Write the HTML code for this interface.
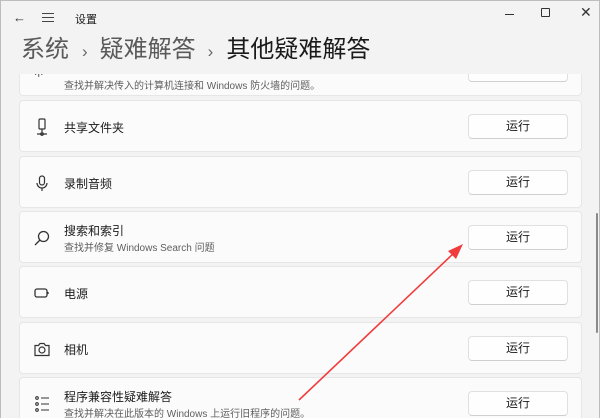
<!DOCTYPE html>
<html><head><meta charset="utf-8"><style>
*{margin:0;padding:0;box-sizing:border-box}
body{width:600px;height:418px;overflow:hidden;background:#f3f3f3;font-family:"Liberation Sans","Noto Sans CJK SC",sans-serif;position:relative;color:#1b1b1b}
.win{position:absolute;left:0;top:0;width:600px;height:418px;border:1px solid #bdbdbd;border-bottom:none}
.t{position:absolute;font-size:11px}
.clip{position:absolute;left:0;top:74px;width:600px;height:344px;overflow:hidden}
.card{position:absolute;left:19px;width:563px;height:52px;background:#fbfbfb;border:1px solid #e6e6e6;border-radius:4px}
.card .n{position:absolute;left:44px;font-size:12px;color:#1b1b1b}
.card .d{position:absolute;left:44px;font-size:10px;color:#5f5f5f}
.btn{position:absolute;left:448px;top:13px;width:100px;height:25px;background:#fefefe;border:1px solid #e0e0e0;border-bottom-color:#cfcfcf;border-radius:4px;font-size:12px;text-align:center;line-height:23px}
.ic{position:absolute;left:12px;top:16px;width:20px;height:20px}
</style></head><body>
<div class="win"></div>
<div class="t" style="left:13px;top:10px;font-size:13px;color:#333">←</div>
<div style="position:absolute;left:42px;top:13px;width:12px;height:9px;border-top:1px solid #444;border-bottom:1px solid #444"><div style="margin-top:3px;height:1px;background:#444"></div></div>
<div class="t" style="left:75px;top:11px;font-size:11px">设置</div>
<div style="position:absolute;left:505px;top:14px;width:9px;height:1px;background:#333"></div>
<div style="position:absolute;left:541px;top:8px;width:9px;height:9px;border:1px solid #333;border-radius:1px"></div>
<div class="t" style="left:580px;top:4px;font-size:14px;color:#333">✕</div>
<div style="position:absolute;left:21px;top:34px;font-size:24px;white-space:nowrap;line-height:32px"><span style="color:#5a5a5a">系统</span><span style="color:#666;font-size:17px;margin:0 12px 0 13px">›</span><span style="color:#5a5a5a">疑难解答</span><span style="color:#666;font-size:17px;margin:0 13px 0 12px">›</span><span style="color:#1a1a1a">其他疑难解答</span></div>
<div class="clip">
 <div class="card" style="top:-30px;height:52px"><div class="d" style="top:32px">查找并解决传入的计算机连接和 Windows 防火墙的问题。</div><div class="btn" style="top:12px"></div><div class="t" style="left:14px;top:24px;font-size:10px;color:#444">·ı·</div></div>
 <div class="card" style="top:26px"><svg class="ic" viewBox="0 0 20 20" fill="none" stroke="#333" stroke-width="1.2"><rect x="7" y="2" width="6" height="10" rx="1"/><path d="M10 12v3M5 17h10"/><circle cx="10" cy="17" r="1.3"/></svg><div class="n" style="top:18px">共享文件夹</div><div class="btn">运行</div></div>
 <div class="card" style="top:82px"><svg class="ic" viewBox="0 0 20 20" fill="none" stroke="#333" stroke-width="1.2"><rect x="7.5" y="3" width="5" height="9" rx="2.5"/><path d="M5 10a5 5 0 0 0 10 0M10 15v3"/></svg><div class="n" style="top:18px">录制音频</div><div class="btn">运行</div></div>
 <div class="card" style="top:137px"><svg class="ic" viewBox="0 0 20 20" fill="none" stroke="#333" stroke-width="1.3"><circle cx="11.5" cy="8.5" r="5"/><path d="M8 12l-5 5"/></svg><div class="n" style="top:10px">搜索和索引</div><div class="d" style="top:27px">查找并修复 Windows Search 问题</div><div class="btn">运行</div></div>
 <div class="card" style="top:192px"><svg class="ic" viewBox="0 0 20 20" fill="none" stroke="#333" stroke-width="1.3"><rect x="3" y="6" width="12" height="8" rx="2"/><path d="M16 9v2"/></svg><div class="n" style="top:18px">电源</div><div class="btn">运行</div></div>
 <div class="card" style="top:248px"><svg class="ic" viewBox="0 0 20 20" fill="none" stroke="#333" stroke-width="1.2"><path d="M3 6.5h3.5l1.5-2h4l1.5 2H17v10H3z"/><circle cx="10" cy="11" r="3"/></svg><div class="n" style="top:18px">相机</div><div class="btn">运行</div></div>
 <div class="card" style="top:303px"><svg class="ic" viewBox="0 0 20 20" fill="none" stroke="#333" stroke-width="1.1"><circle cx="5" cy="4" r="1.3"/><circle cx="5" cy="10" r="1.3"/><circle cx="5" cy="16" r="1.3"/><path d="M9 4h8M9 10h8M9 16h8"/></svg><div class="n" style="top:10px">程序兼容性疑难解答</div><div class="d" style="top:27px">查找并解决在此版本的 Windows 上运行旧程序的问题。</div><div class="btn">运行</div></div>
</div>
<div style="position:absolute;left:596px;top:213px;width:2px;height:120px;background:#8a8a8a;border-radius:1px"></div>
<svg style="position:absolute;left:0;top:0" width="600" height="418"><line x1="299" y1="400" x2="455" y2="252" stroke="#f03c3c" stroke-width="1.6"/><path d="M463 244L448 251L456 259Z" fill="#f03c3c"/></svg>
</body></html>
